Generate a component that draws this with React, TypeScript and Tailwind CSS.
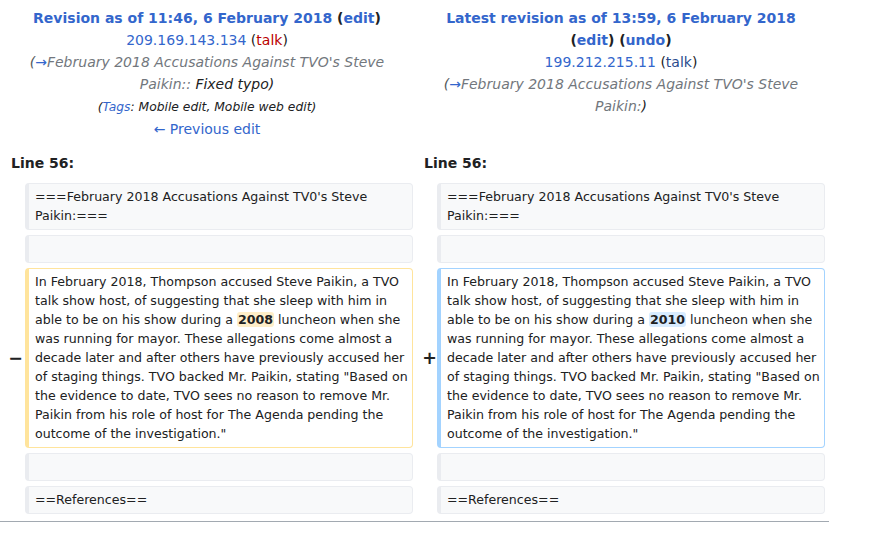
const link = 'text-[#3366cc]';

const ContextLine = ({ text }: { text?: string }) => (
    <div className="bg-[#f8f9fa] border border-[#eaecf0] border-l-4 rounded-[4px] pl-[6px] pr-[3px] pt-[3px] pb-[4px] text-[12.6px] leading-[19px] break-words">
        {text ? text : '\u00a0'}
    </div>
);

const Marker = ({ sign, right }: { sign?: string; right?: boolean }) => (
    <div className={`flex items-center justify-center text-[17.5px] font-bold text-[#202122] ${right ? 'pl-[9px]' : 'pl-[6px]'}`}>{sign}</div>
);

const bodyBefore = 'In February 2018, Thompson accused Steve Paikin, a TVO talk show host, of suggesting that she sleep with him in able to be on his show during a ';
const bodyAfter = ' luncheon when she was running for mayor. These allegations come almost a decade later and after others have previously accused her of staging things. TVO backed Mr. Paikin, stating "Based on the evidence to date, TVO sees no reason to remove Mr. Paikin from his role of host for The Agenda pending the outcome of the investigation."';

export default function App() {
    return (
        <div className="w-[874px] h-[537px] bg-white text-[#202122] text-[14px] leading-[22px]" style={{ fontFamily: '"DejaVu Sans", sans-serif' }}>
            <div className="w-[829px]">
                {/* revision headers */}
                <div className="grid grid-cols-[414px_414px] pt-[7px] text-center">
                    <div className="px-[10px]">
                        <div className="font-bold">
                            <span className={link}>Revision as of 11:46, 6 February 2018</span> (<span className={link}>edit</span>)
                        </div>
                        <div>
                            <span className={link}>209.169.143.134</span> (<span className="text-[#ba0000]">talk</span>)
                        </div>
                        <div className="italic">
                            <span className="text-[#54595d]">(</span>
                            <span className={link}>→</span>
                            <span className="text-[#72777d]">February 2018 Accusations Against TVO's Steve Paikin::</span> Fixed typo)
                        </div>
                        <div className="italic">
                            <span className="text-[12.3px]">(<span className={link}>Tags</span>: Mobile edit, Mobile web edit)</span>
                        </div>
                        <div>
                            <span className={link}>← Previous edit</span>
                        </div>
                    </div>
                    <div className="px-[10px]">
                        <div className="font-bold">
                            <span className={link}>Latest revision as of 13:59, 6 February 2018</span> (<span className={link}>edit</span>) (<span className={link}>undo</span>)
                        </div>
                        <div>
                            <span className={link}>199.212.215.11</span> (<span className="text-[#2a4b8d]">talk</span>)
                        </div>
                        <div className="italic">
                            <span className="text-[#54595d]">(</span>
                            <span className={link}>→</span>
                            <span className="text-[#72777d]">February 2018 Accusations Against TVO's Steve Paikin:</span>)
                        </div>
                    </div>
                </div>

                {/* line numbers */}
                <div className="grid grid-cols-[414px_414px] mt-[12px] font-bold">
                    <div className="pl-[11px]">Line 56:</div>
                    <div className="pl-[10px]">Line 56:</div>
                </div>

                {/* diff rows */}
                <div className="grid grid-cols-[25px_388px_24px_388px] gap-y-[5px] mt-[9px]">
                    <Marker />
                    <ContextLine text="===February 2018 Accusations Against TV0's Steve Paikin:===" />
                    <Marker right />
                    <ContextLine text="===February 2018 Accusations Against TV0's Steve Paikin:===" />

                    <Marker />
                    <ContextLine />
                    <Marker right />
                    <ContextLine />

                    <Marker sign="−" />
                    <div className="bg-white border border-[#ffe49c] border-l-4 rounded-[4px] pl-[6px] pr-[3px] pt-[3px] pb-[4px] text-[12.6px] leading-[19px]">
                        {bodyBefore}
                        <span className="bg-[#feeec8] font-bold rounded-[3px] px-[1px]">2008</span>
                        {bodyAfter}
                    </div>
                    <Marker sign="+" right />
                    <div className="bg-white border border-[#a3d3ff] border-l-4 rounded-[4px] pl-[6px] pr-[3px] pt-[3px] pb-[4px] text-[12.6px] leading-[19px]">
                        {bodyBefore}
                        <span className="bg-[#d8ecff] font-bold rounded-[3px] px-[1px]">2010</span>
                        {bodyAfter}
                    </div>

                    <Marker />
                    <ContextLine />
                    <Marker right />
                    <ContextLine />

                    <Marker />
                    <ContextLine text="==References==" />
                    <Marker right />
                    <ContextLine text="==References==" />
                </div>

                <div className="mt-[7px] h-px bg-[#a2a9b1]" />
            </div>
        </div>
    );
}
